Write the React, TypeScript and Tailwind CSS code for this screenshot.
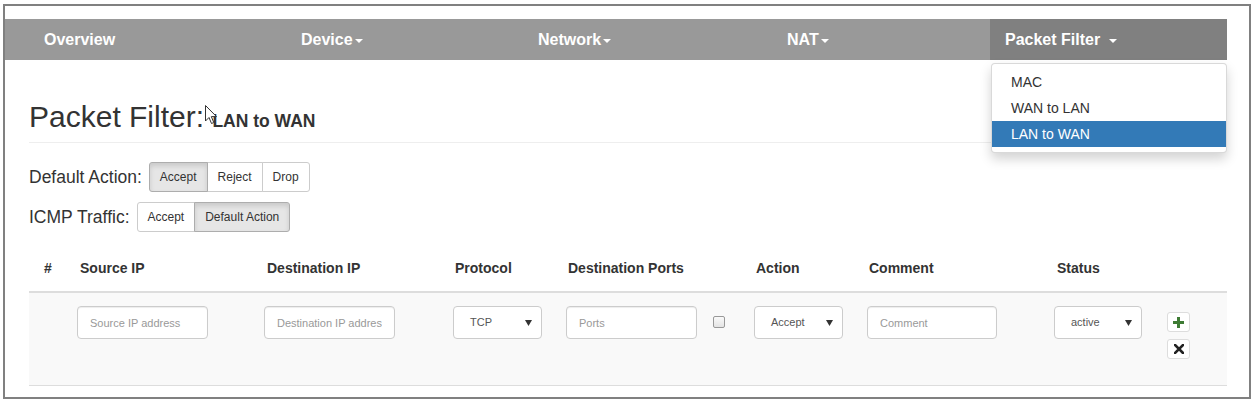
import React from 'react';

const Caret = ({ gap = 'ml-[2px]' }: { gap?: string }) => (
  <span className={`${gap} inline-block w-0 h-0 border-t-[4px] border-t-white border-x-[4px] border-x-transparent mt-[2px]`} />
);

const navItems = [
  { label: 'Overview', w: 'w-[281px] pl-[39px]', caret: false },
  { label: 'Device', w: 'w-[237px] pl-[15px]', caret: true },
  { label: 'Network', w: 'w-[249px] pl-[15px]', caret: true },
  { label: 'NAT', w: 'w-[218px] pl-[15px]', caret: true },
];

const SelectBox = ({ value, w }: { value: string; w: string }) => (
  <div className={`${w} h-[33px] bg-white border border-[#ccc] rounded-[4px] flex items-center justify-between pl-[16px] pr-[9px] text-[11px] text-[#555]`}>
    <span>{value}</span>
    <svg width="7" height="6" viewBox="0 0 7 6">
      <path d="M0 0 L7 0 L3.5 6 Z" fill="#333" />
    </svg>
  </div>
);

const TextInput = ({ placeholder, w }: { placeholder: string; w: string }) => (
  <input
    readOnly
    placeholder={placeholder}
    className={`${w} h-[33px] bg-white border border-[#ccc] rounded-[4px] px-[12px] text-[11px] text-[#555] placeholder:text-[#999] shadow-[inset_0_1px_1px_rgba(0,0,0,0.075)] outline-none`}
  />
);

const BtnGroup = ({ items, active }: { items: string[]; active: number }) => (
  <div className="flex h-[30px]">
    {items.map((t, i) => (
      <div
        key={t}
        className={[
          'flex items-center px-[10px] text-[12px] text-[#333] border',
          i === 0 ? 'rounded-l-[3px]' : '-ml-px',
          i === items.length - 1 ? 'rounded-r-[3px]' : '',
          i === active
            ? 'bg-[#e6e6e6] border-[#adadad] shadow-[inset_0_3px_5px_rgba(0,0,0,0.125)] relative'
            : 'bg-white border-[#ccc]',
        ].join(' ')}
      >
        {t}
      </div>
    ))}
  </div>
);

const cols = [
  { h: '#', w: 'w-[43px]', pl: 'pl-[15px]' },
  { h: 'Source IP', w: 'w-[187px]', pl: 'pl-[8px]' },
  { h: 'Destination IP', w: 'w-[188px]', pl: 'pl-[8px]' },
  { h: 'Protocol', w: 'w-[113px]', pl: 'pl-[8px]' },
  { h: 'Destination Ports', w: 'w-[188px]', pl: 'pl-[8px]' },
  { h: 'Action', w: 'w-[113px]', pl: 'pl-[8px]' },
  { h: 'Comment', w: 'w-[188px]', pl: 'pl-[8px]' },
  { h: 'Status', w: 'w-[110px]', pl: 'pl-[8px]' },
  { h: '', w: 'w-[68px]', pl: 'pl-[8px]' },
];

export default function App() {
  return (
    <div className="w-[1256px] h-[404px] bg-white pl-[3px] pt-[4px] font-['Liberation_Sans',Arial,sans-serif] text-[#333]">
      <div className="relative w-[1248px] h-[395px] border-2 border-[#808080] pt-[13px]">
        {/* navbar */}
        <div className="flex h-[41px] w-[1222px] bg-[#999] text-white font-bold text-[16px]">
          {navItems.map((n) => (
            <div key={n.label} className={`${n.w} flex items-center`}>
              {n.label}
              {n.caret && <Caret />}
            </div>
          ))}
          <div className="w-[237px] pl-[15px] flex items-center bg-[#808080]">
            Packet Filter
            <Caret gap="ml-[9px]" />
          </div>
        </div>

        <div className="px-[24px] w-[1246px]">
          {/* page header */}
          <div className="mt-[40px] w-[1198px] pb-[9px] border-b border-[#eee]">
            <h2 className="h-[33px] text-[30px] leading-[33px] font-normal">
              Packet Filter: <span className="text-[17.5px] leading-none font-bold">LAN to WAN</span>
            </h2>
          </div>

          <div className="mt-[19px] flex items-center gap-[7px]">
            <span className="text-[17.5px]">Default Action:</span>
            <BtnGroup items={['Accept', 'Reject', 'Drop']} active={0} />
          </div>
          <div className="mt-[10px] flex items-center gap-[7px]">
            <span className="text-[17.5px]">ICMP Traffic:</span>
            <BtnGroup items={['Accept', 'Default Action']} active={1} />
          </div>

          {/* table */}
          <div className="mt-[9px] w-[1198px]">
            <div className="flex pt-[17px] pb-[13px] border-b-2 border-[#ddd] text-[14px] leading-[20px] font-bold">
              {cols.map((c, i) => (
                <div key={i} className={`${c.w} ${c.pl}`}>
                  {c.h}
                </div>
              ))}
            </div>
            <div className="flex h-[93px] pt-[13px] bg-[#f9f9f9] border-b border-[#ddd]">
              <div className="w-[43px]" />
              <div className="w-[187px] pl-[5px]">
                <TextInput placeholder="Source IP address" w="w-[131px]" />
              </div>
              <div className="w-[188px] pl-[5px]">
                <TextInput placeholder="Destination IP address" w="w-[131px]" />
              </div>
              <div className="w-[113px] pl-[6px]">
                <SelectBox value="TCP" w="w-[89px]" />
              </div>
              <div className="w-[188px] pl-[6px] flex items-start">
                <TextInput placeholder="Ports" w="w-[131px]" />
                <div className="ml-[16px] mt-[10px] w-[12px] h-[12px] border border-[#999] rounded-[2px] bg-gradient-to-b from-[#fafafa] to-[#e4e4e4]" />
              </div>
              <div className="w-[113px] pl-[6px]">
                <SelectBox value="Accept" w="w-[89px]" />
              </div>
              <div className="w-[188px] pl-[6px]">
                <TextInput placeholder="Comment" w="w-[130px]" />
              </div>
              <div className="w-[110px] pl-[5px]">
                <SelectBox value="active" w="w-[88px]" />
              </div>
              <div className="w-[68px] pl-[8px] pt-[6px] flex flex-col gap-[7px]">
                <div className="w-[23px] h-[20px] bg-white border border-[#ddd] rounded-[3px] flex items-center justify-center">
                  <svg width="11" height="11" viewBox="0 0 11 11">
                    <path d="M4 0h3v4h4v3H7v4H4V7H0V4h4z" fill="#3e7b34" />
                  </svg>
                </div>
                <div className="w-[23px] h-[20px] bg-white border border-[#ddd] rounded-[3px] flex items-center justify-center">
                  <svg width="10" height="10" viewBox="0 0 10 10">
                    <path d="M1 1L9 9M9 1L1 9" stroke="#222" strokeWidth="2.6" strokeLinecap="square" />
                  </svg>
                </div>
              </div>
            </div>
          </div>
        </div>

        {/* dropdown menu */}
        <div className="absolute left-[986px] top-[57px] w-[236px] py-[5px] bg-white border border-[rgba(0,0,0,0.15)] rounded-[4px] shadow-[0_6px_12px_rgba(0,0,0,0.175)] text-[14px] leading-[20px] text-[#333]">
          <div className="px-[19px] py-[3px]">MAC</div>
          <div className="px-[19px] py-[3px]">WAN to LAN</div>
          <div className="px-[19px] py-[3px] bg-[#337ab7] text-white">LAN to WAN</div>
        </div>

        {/* mouse cursor */}
        <svg className="absolute left-[200px] top-[99px]" width="13" height="20" viewBox="0 0 13 20">
          <path d="M0.5 0.5 L0.5 16 L4 12.5 L6.5 18.5 L8.8 17.5 L6.3 11.6 L11.5 11.6 Z" fill="white" stroke="#333" strokeWidth="1" strokeLinejoin="round" />
        </svg>
      </div>
    </div>
  );
}
